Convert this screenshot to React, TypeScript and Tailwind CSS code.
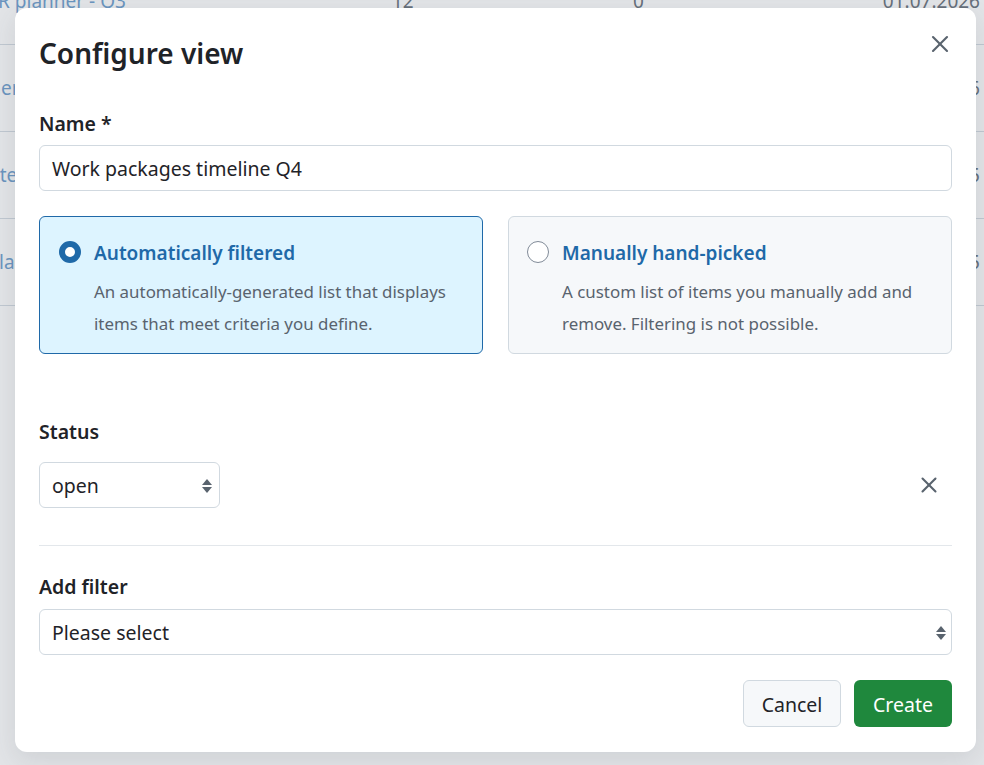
import { X } from 'lucide-react';

// rows of the project list sitting behind the dialog
const ROWS = [
  { name: 'HR planner - Q3', shift: '-ml-[16px]', total: '12', open: '0', due: '01.07.2026' },
  { name: 'Customer feedback tracker', shift: '-ml-[68px]', total: '8', open: '3', due: '15.07.2026' },
  { name: 'Website update', shift: '-ml-[54px]', total: '5', open: '1', due: '22.08.2025' },
  { name: 'Atlas migration', shift: '-ml-[20px]', total: '4', open: '2', due: '30.09.2025' },
];

function UpDown() {
  return (
    <svg width="12" height="18" viewBox="0 0 12 18" className="text-[#59636e]">
      <path d="M6 2 L11 8 H1 Z" fill="currentColor" />
      <path d="M6 16 L11 10 H1 Z" fill="currentColor" />
    </svg>
  );
}

function Radio({ checked }: { checked: boolean }) {
  return checked ? (
    <span className="mt-[4px] h-[22px] w-[22px] shrink-0 rounded-full border-[6px] border-[#1f69a8] bg-white" />
  ) : (
    <span className="mt-[4px] h-[22px] w-[22px] shrink-0 rounded-full border border-[#818b98] bg-white" />
  );
}

function ViewTypeCard({
  checked,
  title,
  text,
}: {
  checked: boolean;
  title: string;
  text: string;
}) {
  return (
    <div
      className={`flex h-[138px] gap-[13px] rounded-[6px] border pt-[20px] ${
        checked
          ? 'border-[#1f69a8] bg-[#ddf4ff] pl-[19px] pr-[24px]'
          : 'border-[#d1d9e0] bg-[#f6f8fa] pl-[18px] pr-[24px]'
      }`}
    >
      <Radio checked={checked} />
      <div>
        <p className="text-[19px] leading-[32px] font-semibold text-[#1f69a8]">{title}</p>
        <p className="mt-[7px] text-[16.9px] leading-[32px] text-[#59636e]">{text}</p>
      </div>
    </div>
  );
}

export default function App() {
  return (
    <div className="relative h-[765px] w-[984px] overflow-hidden bg-white font-['Noto_Sans',sans-serif] text-[#1f2328]">
      {/* Page behind the dialog */}
      <div className="-mt-[42px]">
        {ROWS.map((r) => (
          <div
            key={r.name}
            className="grid h-[87px] grid-cols-[390px_243px_1fr] items-center border-b border-[#d1d9e0] text-[19px] text-[#59636e]"
          >
            <span className={`whitespace-nowrap text-[#5f95c9] ${r.shift}`}>{r.name}</span>
            <span className="pl-[2px]">{r.total}</span>
            <div className="flex items-center justify-between pr-[4px]">
              <span>{r.open}</span>
              <span>{r.due}</span>
            </div>
          </div>
        ))}
      </div>

      {/* Backdrop */}
      <div className="absolute inset-0 bg-[#8c959f]/25" />

      {/* Dialog */}
      <div className="absolute left-[15px] top-[8px] w-[961px] rounded-[12px] bg-white px-[24px] pb-[25px] pt-[24px] shadow-[0_8px_24px_rgba(66,74,83,0.12)]">
        <button className="absolute right-[20px] top-[20px] p-[2px] text-[#59636e]">
          <X size={28} strokeWidth={1.8} />
        </button>

        <h2 className="text-[28px] leading-[42px] font-semibold">Configure view</h2>

        <label className="mt-[36px] block text-[19.5px] leading-[28px] font-semibold">Name *</label>
        <div className="mt-[7px] flex h-[46px] items-center rounded-[6px] border border-[#d1d9e0] px-[12px] pt-[2px] text-[19.5px]">
          Work packages timeline Q4
        </div>

        <div className="mt-[25px] grid grid-cols-2 gap-[25px]">
          <ViewTypeCard
            checked
            title="Automatically filtered"
            text="An automatically-generated list that displays items that meet criteria you define."
          />
          <ViewTypeCard
            checked={false}
            title="Manually hand-picked"
            text="A custom list of items you manually add and remove. Filtering is not possible."
          />
        </div>

        <label className="mt-[64px] block text-[19.5px] leading-[28px] font-semibold">Status</label>
        <div className="mt-[16px] flex items-center justify-between">
          <div className="flex h-[46px] w-[181px] items-center justify-between rounded-[6px] border border-[#d1d9e0] pl-[12px] pr-[6px] pt-[2px] text-[19.5px]">
            open
            <UpDown />
          </div>
          <button className="mr-[10px] text-[#59636e]">
            <X size={26} strokeWidth={1.9} />
          </button>
        </div>

        <div className="mt-[37px] h-px bg-[#e3e7eb]" />

        <label className="mt-[27px] block text-[19.5px] leading-[28px] font-semibold">Add filter</label>
        <div className="mt-[8px] flex h-[46px] items-center justify-between rounded-[6px] border border-[#d1d9e0] pl-[12px] pr-[4px] pt-[2px] text-[19.5px]">
          Please select
          <UpDown />
        </div>

        <div className="mt-[25px] flex justify-end gap-[13px]">
          <button className="h-[47px] w-[98px] rounded-[6px] border border-[#d1d9e0] bg-[#f6f8fa] pt-[2px] text-[19.5px]">
            Cancel
          </button>
          <button className="h-[47px] w-[98px] rounded-[6px] bg-[#1f883d] pt-[2px] text-[19.5px] text-white">
            Create
          </button>
        </div>
      </div>
    </div>
  );
}
